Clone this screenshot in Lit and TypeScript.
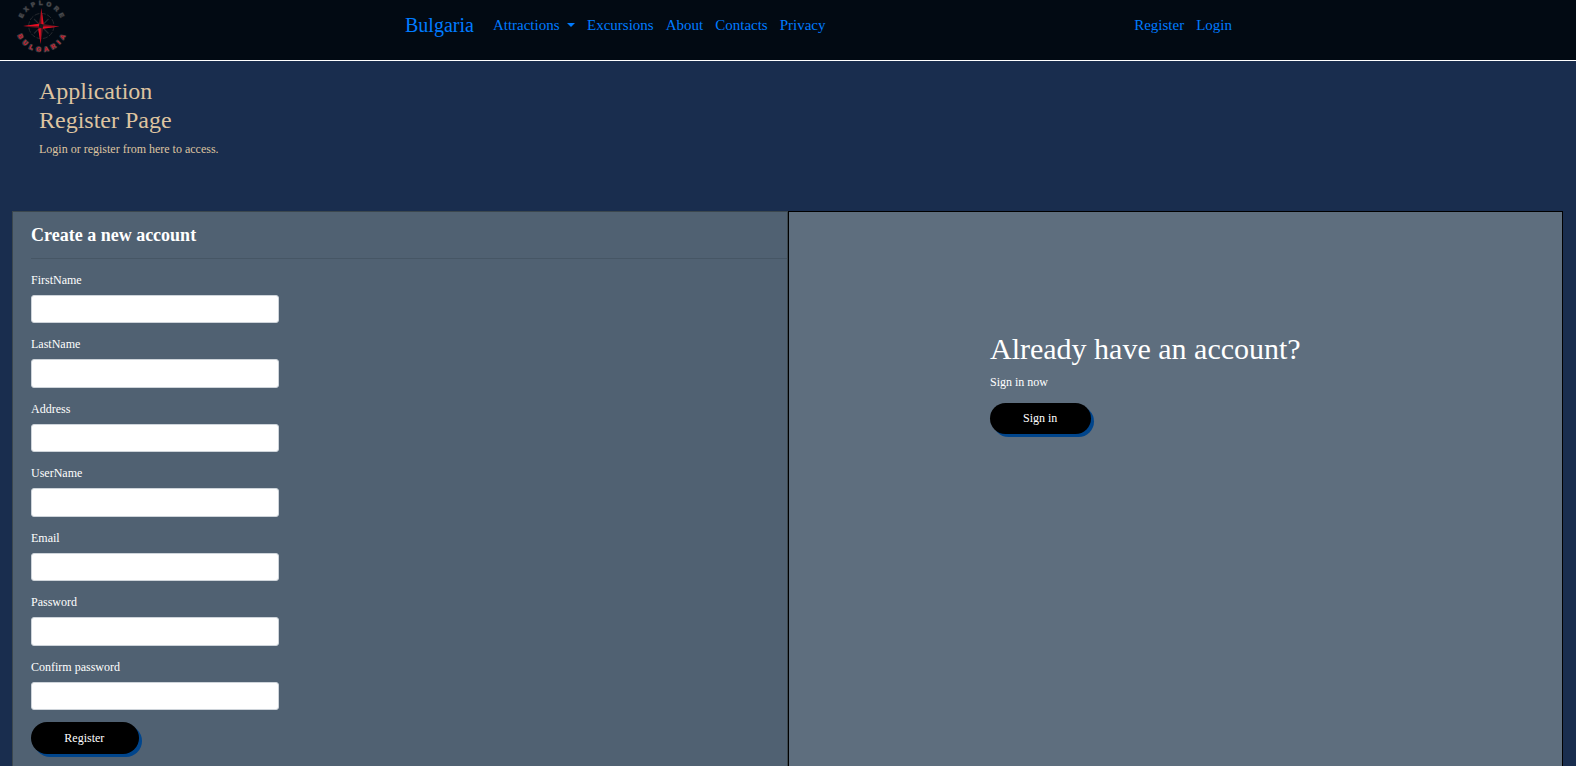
import { LitElement, html, css } from "lit";
import { customElement } from "lit/decorators.js";

const FIELDS = [
  { label: "FirstName", type: "text" },
  { label: "LastName", type: "text" },
  { label: "Address", type: "text" },
  { label: "UserName", type: "text" },
  { label: "Email", type: "email" },
  { label: "Password", type: "password" },
  { label: "Confirm password", type: "password" },
];

@customElement("site-logo")
class SiteLogo extends LitElement {
  static styles = css`
    :host { display: block; width: 56px; height: 56px; }
    svg { display: block; }
    text { font-family: "Liberation Sans", sans-serif; font-weight: bold; stroke-linejoin: round; paint-order: stroke; }
    .top { font-size: 6px; fill: #4d4e52; stroke: #2b2e33; stroke-width: 1.2px; }
    .bottom { font-size: 6px; fill: #d8172a; stroke: #3f4145; stroke-width: 1.8px; }
  `;
  render() {
    return html`<svg width="56" height="56" viewBox="0 0 56 56">
      <defs>
        <path id="upper" d="M9 19.2A20.5 20.5 0 0 1 48 19.2" />
        <path id="lower" d="M4.5 34.7A25.5 25.5 0 0 0 52.5 34.7" />
      </defs>
      <circle cx="28.3" cy="26" r="12.6" fill="none" stroke="#26292e" stroke-width="1" stroke-dasharray="5 1.5" />
      <path d="M21 19L35.5 33.5M35.5 19L21 33.5" stroke="#26292e" stroke-width="1.1" />
      <path d="M28.3 8L26 24L30.8 24ZM46.5 26.5L30 24L30 28.6ZM27.6 44L25.2 28L30 28ZM10 26.5L26 24L26 28Z" fill="#60131d" />
      <path d="M28.4 8L30.6 24L28.4 25ZM46.5 26.5L30 28.8L30 26.5ZM27.6 44L25.2 29L27.8 28ZM10 26L26 23.8L26 26.3Z" fill="#e80c22" />
      <circle cx="28.3" cy="26" r="2" fill="#17191d" />
      <text class="top"><textPath href="#upper" startOffset="1" textLength="49">EXPLORE</textPath></text>
      <text class="bottom"><textPath href="#lower" startOffset="1" textLength="60">BULGARIA</textPath></text>
    </svg>`;
  }
}

@customElement("site-header")
class SiteHeader extends LitElement {
  static styles = css`
    :host { display: block; background: #020a13; border-bottom: 1px solid #fff; height: 61px; }
    .bar { display: flex; height: 50px; align-items: center; padding-right: 344px; }
    .logo { margin-left: 13px; align-self: flex-start; }
    a { color: #007bff; text-decoration: none; white-space: nowrap; font-size: 15px; line-height: 22px; }
    .brand { font-size: 20px; line-height: 30px; margin-left: 336px; margin-right: 19px; }
    nav { display: flex; gap: 12px; align-items: center; }
    .account { margin-left: auto; }
    .caret::after {
      content: ""; display: inline-block; margin-left: 7.5px; vertical-align: 3px;
      border-top: 4px solid; border-left: 4px solid transparent; border-right: 4px solid transparent;
    }
  `;
  render() {
    return html`<div class="bar">
      <site-logo class="logo"></site-logo>
      <a class="brand" href="#">Bulgaria</a>
      <nav>
        <a class="caret" href="#">Attractions</a><a href="#">Excursions</a><a href="#">About</a><a href="#">Contacts</a><a href="#">Privacy</a>
      </nav>
      <nav class="account"><a href="#">Register</a><a href="#">Login</a></nav>
    </div>`;
  }
}

@customElement("app-root")
class AppRoot extends LitElement {
  static styles = css`
    :host {
      display: block; height: 766px; overflow: hidden; background: #192d4e;
      font-family: "Liberation Serif", "Times New Roman", serif; font-size: 12px; line-height: 18px; color: #fff;
    }
    * { box-sizing: border-box; }
    h1, h2, h3, p, hr { margin: 0; font-weight: normal; }
    .intro { height: 150px; padding: 16px 39px; color: #dec4a0; }
    .intro h2 { font-size: 24px; line-height: 28.8px; margin-bottom: 5px; }
    .panels { display: grid; grid-template-columns: 776px 775px; margin-left: 12px; height: 600px; }
    .create { background: #506172; border: 1px solid #3b474e; padding: 12px 0 0 18px; }
    .create h3 { font-size: 18px; line-height: 22px; font-weight: bold; }
    hr { border: 0; border-top: 1px solid #465665; margin: 12px 0 11.8px; }
    .field { height: 64.5px; }
    .field:last-of-type { height: 64.2px; }
    label { display: block; margin-bottom: 6px; }
    input {
      display: block; width: 248px; height: 28.5px; border: 1px solid #ced4da; border-radius: 3px;
      background: #fff; font: inherit; padding: 4px 9px;
    }
    .signin { background: #5e6e7e; border: 1px solid #000; padding: 119px 0 0 201px; }
    .signin h1 { font-size: 30px; line-height: 36px; margin-bottom: 6px; }
    .signin p { margin-bottom: 12px; }
    button {
      display: block; height: 31px; padding: 0 34px 1px 33px; border: 0; border-radius: 16px; background: #000;
      color: #fff; font: inherit; box-shadow: 3px 3px 0 #00458c;
    }
    .create button { height: 32px; padding: 0 34.7px 0 33.3px; }
  `;
  render() {
    return html`
      <site-header></site-header>
      <section class="intro">
        <h2>Application<br />Register Page</h2>
        <p>Login or register from here to access.</p>
      </section>
      <main class="panels">
        <section class="create">
          <h3>Create a new account</h3>
          <hr />
          ${FIELDS.map((f) => html`<div class="field"><label>${f.label}</label><input type=${f.type} /></div>`)}
          <button>Register</button>
        </section>
        <section class="signin">
          <h1>Already have an account?</h1>
          <p>Sign in now</p>
          <button>Sign in</button>
        </section>
      </main>`;
  }
}
